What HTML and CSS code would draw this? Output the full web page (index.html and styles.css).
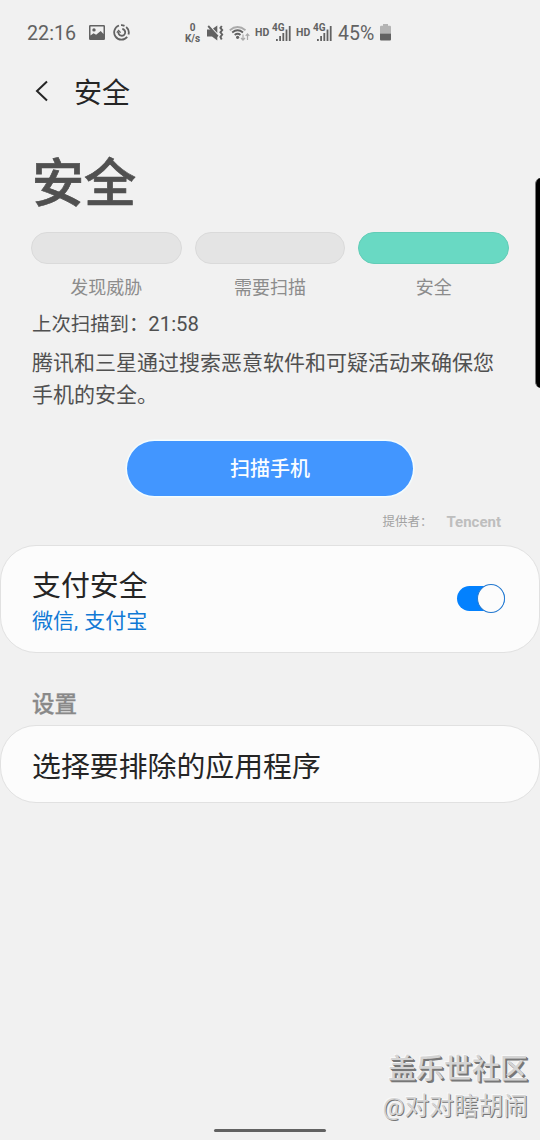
FILE: index.html
```html
<!DOCTYPE html>
<html lang="zh-CN">
<head>
<meta charset="utf-8">
<title>安全</title>
<link rel="stylesheet" href="styles.css">
</head>
<body>
<div class="screen">
  <header class="status">
    <span class="clock">22:16</span>
    <svg class="picture" width="16" height="15" viewBox="0 0 16 15"><path fill="#626262" fill-rule="evenodd" d="M1.300 0h13.400Q16 0 16 1.300v12.400Q16 15 14.700 15H1.300Q0 15 0 13.700V1.300Q0 0 1.300 0ZM1.500 1.500V10.600L4.500 8.200 7.100 9.800 11.700 6 14.500 9.100V1.500ZM5 3.200a1.700 1.700 0 1 1 0 3.400 1.700 1.700 0 0 1 0-3.400Z"/></svg>
    <svg class="sync" width="17" height="17" viewBox="0 0 17 17" fill="none" stroke="#626262" stroke-width="1.800"><path d="M6 1.500A7.300 7.300 0 1 0 14.200 12.900M15.500 10.500A7.300 7.300 0 0 0 13.200 3M8 1.200Q9.800 1.100 11.500 1.900"/><path d="M9.300 5A3.400 3.400 0 1 1 5.500 7.600"/><path d="M3.800 8.600 5.600 6.400 7.600 8.600" stroke-width="1.300"/></svg>
    <span class="speed"><b>0</b><b>K/s</b></span>
    <svg class="mute" width="17" height="16" viewBox="0 0 17 16"><path fill="#626262" d="M0 4.500h4L10.300 10.500V15.500L5 11.500H0ZM6 3.600 10.300.5V8Z"/><path d="M1.200 1 10.800 11.300" stroke="#626262" stroke-width="1.900"/><path d="M14.800 1 13.400 3 15.200 5 13.400 7.300 15.200 9.500 13.400 11.800 14.700 14.500" fill="none" stroke="#626262" stroke-width="1.900"/></svg>
    <svg class="wifi" width="21" height="17" viewBox="0 0 21 17" fill="none"><path d="M.8 5.200Q8.500-1.300 16.500 5.200" stroke="#aaa" stroke-width="1.800"/><path d="M3.200 7.400Q8.600 3 14 7.400M5.700 9.900Q8.600 7.600 11.500 9.900" stroke="#626262" stroke-width="1.900"/><circle cx="8.600" cy="12.300" r="1.600" fill="#626262"/><path d="M14 9.500V15M12 13l2 2.200 2-2.200M18.500 15V9M16.700 10.900l1.800-2 1.800 2" stroke="#aaa" stroke-width="1.200"/></svg>
    <b class="hd">HD</b>
    <span class="cell"><b class="gen">4G</b><svg width="15" height="15" viewBox="0 0 15 15" fill="#626262"><path d="M0 13h1.800v2H0ZM3.200 10H5v5H3.200ZM6.400 7h1.800v8H6.400ZM9.600 3.500h1.800V15H9.600ZM12.800 0h1.800v15h-1.800Z"/></svg></span>
    <b class="hd">HD</b>
    <span class="cell"><b class="gen">4G</b><svg width="15" height="15" viewBox="0 0 15 15" fill="#626262"><path d="M0 13h1.800v2H0ZM3.200 10H5v5H3.200ZM6.400 7h1.800v8H6.400ZM9.600 3.500h1.800V15H9.600ZM12.800 0h1.800v15h-1.800Z"/></svg></span>
    <span class="percent">45%</span>
    <svg class="battery" width="11" height="17" viewBox="0 0 11 17"><path fill="#b4b4b4" d="M3 0h5v1.800h2Q11 1.800 11 3v6.500H0V3Q0 1.800 1 1.800h2Z"/><path fill="#626262" d="M0 9.500h11V15.500Q11 16.500 10 16.500H1Q0 16.500 0 15.500Z"/></svg>
  </header>
  <nav class="appbar">
    <svg width="14" height="22" viewBox="0 0 14 22" fill="none" stroke="#252525" stroke-width="2"><path d="M12 1.500 2 11l10 9.500"/></svg>
    <span>安全</span>
  </nav>
  <main>
    <section class="overview">
      <h1>安全</h1>
      <div class="levels">
        <div class="level"><div class="pill"></div><span>发现威胁</span></div>
        <div class="level"><div class="pill"></div><span>需要扫描</span></div>
        <div class="level"><div class="pill safe"></div><span>安全</span></div>
      </div>
      <p class="last">上次扫描到：<span>21:58</span></p>
      <p class="about">腾讯和三星通过搜索恶意软件和可疑活动来确保您手机的安全。</p>
      <button class="scan">扫描手机</button>
      <div class="provider"><span>提供者：</span><b>Tencent</b></div>
    </section>
    <section class="card payment">
      <div><h2>支付安全</h2><p>微信, 支付宝</p></div>
      <div class="toggle"><i></i></div>
    </section>
    <h3>设置</h3>
    <section class="card exclude"><h2>选择要排除的应用程序</h2></section>
  </main>
  <div class="edge"></div>
  <div class="watermark"><strong>盖乐世社区</strong><span>@对对瞎胡闹</span></div>
  <div class="home"></div>
</div>
</body>
</html>
```
FILE: styles.css
```css
* { box-sizing: border-box; }
body, h1, h2, h3, p { margin: 0; }
body {
  background: #f1f1f1;
  color: #505050;
  font-family: Roboto, "Noto Sans CJK SC", sans-serif;
}
.screen {
  position: relative;
  width: 540px;
  height: 1140px;
  overflow: hidden;
  background: #f1f1f1;
}
.status {
  display: flex;
  align-items: center;
  height: 66px;
  padding-left: 27px;
  color: #626262;
}
.status > * { flex: none; }
.clock { width: 62px; padding-top: 1px; font-size: 19.7px; }
.picture { margin-top: -2px; }
.sync { margin: -2px 0 0 8px; }
.speed {
  display: flex;
  flex-direction: column;
  align-items: center;
  width: 19px;
  margin-left: 53px;
  font-size: 10px;
  line-height: 11px;
}
.mute { margin-left: 5px; }
.wifi { margin-left: 5px; }
.hd { width: 15px; margin-left: 5px; font-size: 10.5px; line-height: 16px; }
.cell { position: relative; display: flex; justify-content: flex-end; width: 19px; margin-left: 2px; }
.gen { position: absolute; left: 0; top: -3px; font-size: 10px; line-height: 10px; }
.percent { width: 42px; margin-left: 6px; padding-top: 1px; font-size: 19.5px; }
.battery { margin-top: -2px; }
.appbar {
  display: flex;
  align-items: center;
  height: 52px;
  padding-left: 35px;
  color: #252525;
  font-size: 28px;
  line-height: 40px;
}
.appbar svg { margin: -2px 25px 0 0; }
.appbar span { padding-top: 3px; }
.overview { display: flex; flex-direction: column; height: 427px; padding: 37px 31px 0; }
h1 { padding-left: 1px; font-size: 52px; font-weight: 500; line-height: 60px; -webkit-text-stroke: .7px currentColor; }
.levels { display: grid; grid-template-columns: repeat(3, 1fr); gap: 13px; margin-top: 17px; }
.level { text-align: center; color: #8c8c8c; font-size: 18px; line-height: 24px; }
.pill { height: 32px; margin-bottom: 12px; border: 1px solid #dadada; border-radius: 16px; background: #e4e4e4; }
.safe { border-color: #62cdb7; background: #69d9c3; }
.last { margin-top: 12px; padding-left: 1px; font-size: 19.4px; line-height: 24px; }
.last span { font-size: 20.3px; }
.about { margin-top: 10px; padding-left: 1px; font-size: 21px; line-height: 32px; }
.scan {
  align-self: center;
  width: 286px;
  height: 55px;
  margin-top: 30px;
  padding: 1px 0 0;
  border: 0;
  border-radius: 28px;
  background: #4296ff;
  box-shadow: 0 0 1px 1.5px #f4fdff;
  color: #fafdff;
  font: 500 20px/54px Roboto, "Noto Sans CJK SC", sans-serif;
}
.provider {
  display: flex;
  justify-content: flex-end;
  gap: 14px;
  margin-top: 18px;
  padding-right: 8px;
  color: #a2a2a2;
  font-size: 12.5px;
  line-height: 16px;
}
.provider b { color: #bebebe; font-size: 15px; }
.card {
  display: flex;
  align-items: center;
  justify-content: space-between;
  padding: 0 34px 0 31px;
  border: 1px solid #e1e1e1;
  border-radius: 36px;
  background: #fcfcfc;
}
.payment { height: 108px; }
.payment > div:first-child { padding-top: 6px; }
.exclude { height: 78px; padding-top: 6px; }
h2 { color: #252525; font-size: 28.9px; font-weight: 400; line-height: 38px; }
.payment p { color: #1179d5; font-size: 21px; line-height: 32px; word-spacing: 1px; }
.toggle { display: flex; justify-content: flex-end; align-items: center; width: 48px; height: 25px; margin-top: -2px; border-radius: 13px; background: #0381fe; }
.toggle i { flex: none; width: 28px; height: 29px; border: 1px solid #2378cf; border-radius: 50%; background: #fcfcfc; }
h3 { height: 72px; padding: 35px 32px 0; color: #898989; font-size: 22.5px; font-weight: 500; line-height: 32px; -webkit-text-stroke: .3px currentColor; }
.edge { position: absolute; left: 535px; top: 178px; width: 12px; height: 210px; border-left: 1px solid #777; border-radius: 7px; background: #000; }
.watermark {
  position: absolute;
  right: 12px;
  bottom: 15px;
  display: flex;
  flex-direction: column;
  align-items: flex-end;
  color: #d4d4d4;
  text-shadow: 1px 1px 0 #777, -1px -1px 0 #f8f8f8;
}
.watermark strong { font-size: 28px; font-weight: 500; line-height: 38px; text-shadow: 1px 1px 0 #777, 2px 2px 0 #777, -1px -1px 0 #f8f8f8; }
.watermark span { font-size: 24.7px; line-height: 36px; }
.home { position: absolute; left: 214px; top: 1129px; width: 112px; height: 3px; border-radius: 2px; background: #626262; }
```
